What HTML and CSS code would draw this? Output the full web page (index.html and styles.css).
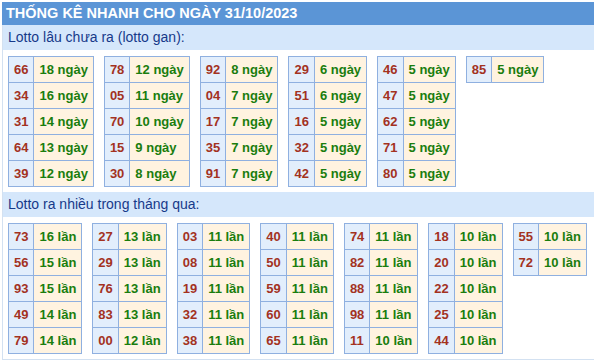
FILE: index.html
```html
<!DOCTYPE html>
<html lang="vi">
<head>
<meta charset="utf-8">
<title>Thống kê nhanh</title>
<link rel="stylesheet" href="styles.css">
</head>
<body>
<div class="box">
  <div class="title">THỐNG KÊ NHANH CHO NGÀY 31/10/2023</div>
  <div class="band">Lotto lâu chưa ra (lotto gan):</div>
  <div class="tables">
    <table class="t"><tr><td class="n">66</td><td class="v">18 ngày</td></tr><tr><td class="n">34</td><td class="v">16 ngày</td></tr><tr><td class="n">31</td><td class="v">14 ngày</td></tr><tr><td class="n">64</td><td class="v">13 ngày</td></tr><tr><td class="n">39</td><td class="v">12 ngày</td></tr></table>
    <table class="t"><tr><td class="n">78</td><td class="v">12 ngày</td></tr><tr><td class="n">05</td><td class="v">11 ngày</td></tr><tr><td class="n">70</td><td class="v">10 ngày</td></tr><tr><td class="n">15</td><td class="v">9 ngày</td></tr><tr><td class="n">30</td><td class="v">8 ngày</td></tr></table>
    <table class="t"><tr><td class="n">92</td><td class="v">8 ngày</td></tr><tr><td class="n">04</td><td class="v">7 ngày</td></tr><tr><td class="n">17</td><td class="v">7 ngày</td></tr><tr><td class="n">35</td><td class="v">7 ngày</td></tr><tr><td class="n">91</td><td class="v">7 ngày</td></tr></table>
    <table class="t"><tr><td class="n">29</td><td class="v">6 ngày</td></tr><tr><td class="n">51</td><td class="v">6 ngày</td></tr><tr><td class="n">16</td><td class="v">5 ngày</td></tr><tr><td class="n">32</td><td class="v">5 ngày</td></tr><tr><td class="n">42</td><td class="v">5 ngày</td></tr></table>
    <table class="t"><tr><td class="n">46</td><td class="v">5 ngày</td></tr><tr><td class="n">47</td><td class="v">5 ngày</td></tr><tr><td class="n">62</td><td class="v">5 ngày</td></tr><tr><td class="n">71</td><td class="v">5 ngày</td></tr><tr><td class="n">80</td><td class="v">5 ngày</td></tr></table>
    <table class="t"><tr><td class="n">85</td><td class="v">5 ngày</td></tr></table>
  </div>
  <div class="band">Lotto ra nhiều trong tháng qua:</div>
  <div class="tables">
    <table class="t"><tr><td class="n">73</td><td class="v">16 lần</td></tr><tr><td class="n">56</td><td class="v">15 lần</td></tr><tr><td class="n">93</td><td class="v">15 lần</td></tr><tr><td class="n">49</td><td class="v">14 lần</td></tr><tr><td class="n">79</td><td class="v">14 lần</td></tr></table>
    <table class="t"><tr><td class="n">27</td><td class="v">13 lần</td></tr><tr><td class="n">29</td><td class="v">13 lần</td></tr><tr><td class="n">76</td><td class="v">13 lần</td></tr><tr><td class="n">83</td><td class="v">13 lần</td></tr><tr><td class="n">00</td><td class="v">12 lần</td></tr></table>
    <table class="t"><tr><td class="n">03</td><td class="v">11 lần</td></tr><tr><td class="n">08</td><td class="v">11 lần</td></tr><tr><td class="n">19</td><td class="v">11 lần</td></tr><tr><td class="n">32</td><td class="v">11 lần</td></tr><tr><td class="n">38</td><td class="v">11 lần</td></tr></table>
    <table class="t"><tr><td class="n">40</td><td class="v">11 lần</td></tr><tr><td class="n">50</td><td class="v">11 lần</td></tr><tr><td class="n">59</td><td class="v">11 lần</td></tr><tr><td class="n">60</td><td class="v">11 lần</td></tr><tr><td class="n">65</td><td class="v">11 lần</td></tr></table>
    <table class="t"><tr><td class="n">74</td><td class="v">11 lần</td></tr><tr><td class="n">82</td><td class="v">11 lần</td></tr><tr><td class="n">88</td><td class="v">11 lần</td></tr><tr><td class="n">98</td><td class="v">11 lần</td></tr><tr><td class="n">11</td><td class="v">10 lần</td></tr></table>
    <table class="t"><tr><td class="n">18</td><td class="v">10 lần</td></tr><tr><td class="n">20</td><td class="v">10 lần</td></tr><tr><td class="n">22</td><td class="v">10 lần</td></tr><tr><td class="n">25</td><td class="v">10 lần</td></tr><tr><td class="n">44</td><td class="v">10 lần</td></tr></table>
    <table class="t"><tr><td class="n">55</td><td class="v">10 lần</td></tr><tr><td class="n">72</td><td class="v">10 lần</td></tr></table>
  </div>
</div>
</body>
</html>
```
FILE: styles.css
```css
html, body {
  margin: 0;
  padding: 0;
  background: #ffffff;
}
body {
  font-family: "Liberation Sans", Arial, sans-serif;
  overflow: hidden;
}
.box {
  margin: 2px 0 0 2px;
  width: 620px;
  border-left: 1px solid #d3e1f1;
  border-bottom: 1px solid #d3e1f1;
}
.title {
  background: #5b95d6;
  color: #ffffff;
  font-weight: bold;
  font-size: 14.5px;
  height: 23px;
  line-height: 23px;
  padding-left: 4px;
  margin-left: -1px;
}
.band {
  background: #d5e7fb;
  color: #173a8a;
  font-size: 14px;
  height: 25px;
  line-height: 25px;
  padding-left: 5px;
}
.tables {
  display: flex;
  align-items: flex-start;
  gap: 10px;
  padding: 6px 0 5px 5px;
}
.t {
  border-collapse: collapse;
  font-size: 13px;
  font-weight: bold;
  line-height: 15px;
}
.t td {
  border: 1px solid #8fb0e0;
  padding: 5px;
  white-space: nowrap;
}
.n {
  background: #e2eefc;
  color: #a3321f;
}
.v {
  background: #fff3e0;
  color: #1a7d0e;
}
```
